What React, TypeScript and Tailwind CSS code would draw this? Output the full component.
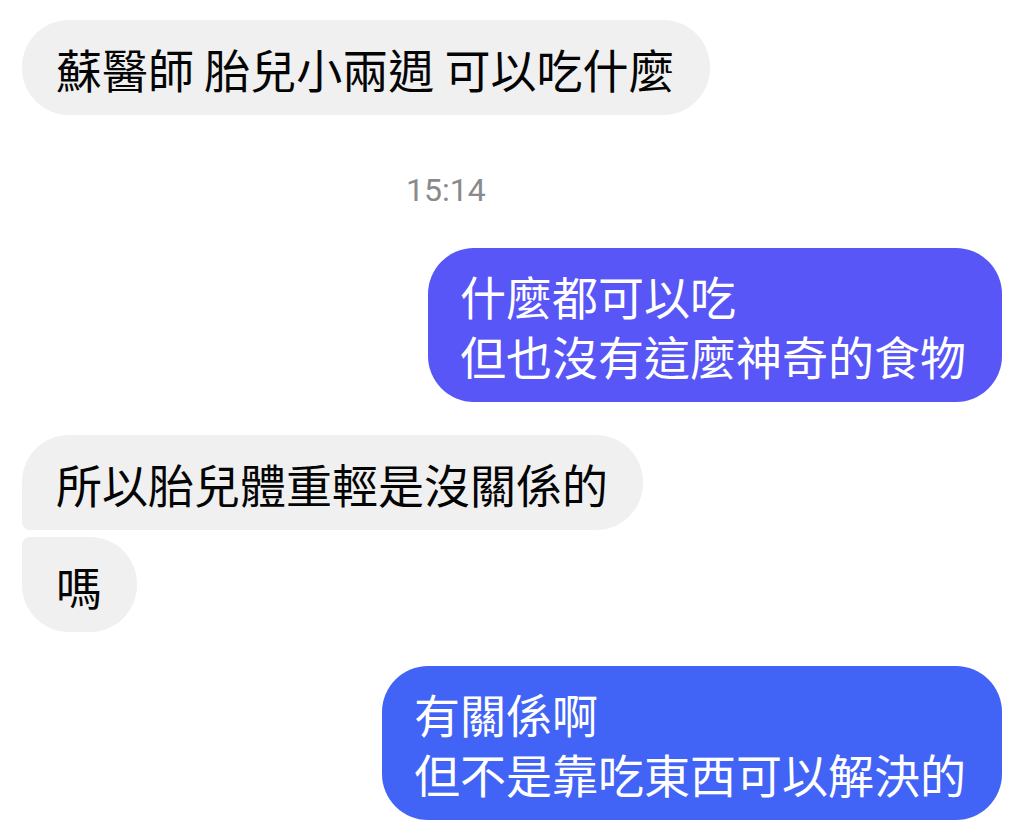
const cjk = "font-['Noto_Sans_CJK_TC','Noto_Sans_CJK_SC',sans-serif]"

function Incoming({ text, corner }: { text: string; corner: string }) {
  return (
    <div className="flex justify-start">
      <div
        className={`bg-[#f0f0f0] text-[#050505] rounded-[47px] ${corner} h-[95px] pl-[34px] pr-[35px] flex items-center text-[46px] leading-[60px] whitespace-pre`}
      >
        {text}
      </div>
    </div>
  )
}

function Outgoing({ lines, color }: { lines: string[]; color: string }) {
  return (
    <div className="flex justify-end">
      <div className={`${color} text-white rounded-[46px] pl-[32px] pr-[36px] py-[17px] text-[46px] leading-[60px]`}>
        {lines.map((l) => (
          <div key={l}>{l}</div>
        ))}
      </div>
    </div>
  )
}

export default function App() {
  return (
    <div className={`min-h-screen w-[1024px] bg-white px-[22px] pt-[20px] ${cjk}`}>
      <Incoming text="蘇醫師 胎兒小兩週 可以吃什麼" corner="" />

      <div className="mt-[55px] mb-[38px] h-[40px] flex items-center pl-[384px]">
        <span className="font-['Roboto','Liberation_Sans',sans-serif] text-[32px] text-[#8a8a8d]">15:14</span>
      </div>

      <Outgoing lines={["什麼都可以吃", "但也沒有這麼神奇的食物"]} color="bg-[#5856f6]" />

      <div className="mt-[33px] flex flex-col gap-[7px]">
        <Incoming text="所以胎兒體重輕是沒關係的" corner="rounded-bl-[8px]" />
        <Incoming text="嗎" corner="rounded-tl-[8px]" />
      </div>

      <div className="mt-[34px]">
        <Outgoing lines={["有關係啊", "但不是靠吃東西可以解決的"]} color="bg-[#4264f6]" />
      </div>
    </div>
  )
}
